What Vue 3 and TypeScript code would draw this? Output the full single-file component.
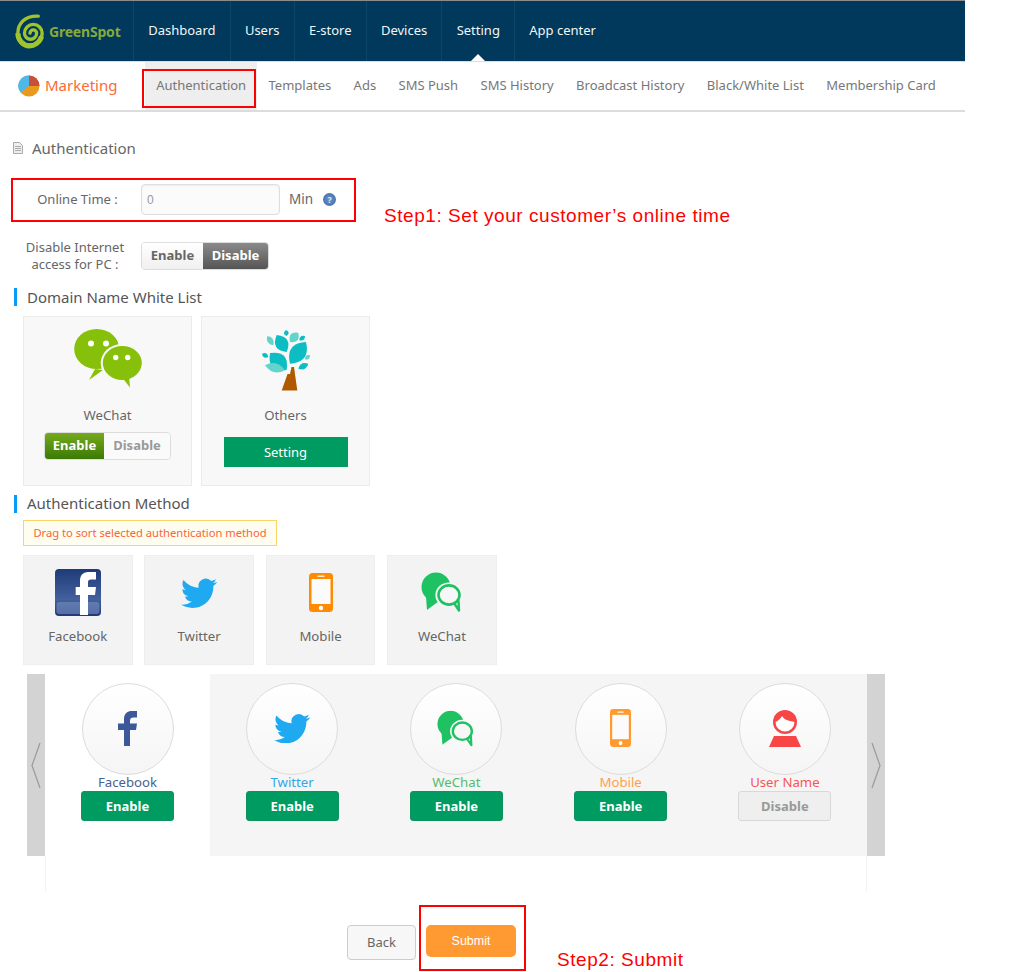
<template>
  <div class="page">
    <svg class="defs" width="0" height="0">
      <defs>
        <symbol id="ic-twitter" viewBox="0 1.5 24 20">
          <path d="M23.953 4.57a10 10 0 01-2.825.775 4.958 4.958 0 002.163-2.723c-.951.555-2.005.959-3.127 1.184a4.92 4.92 0 00-8.384 4.482C7.69 8.095 4.067 6.13 1.64 3.162a4.822 4.822 0 00-.666 2.475c0 1.71.87 3.213 2.188 4.096a4.904 4.904 0 01-2.228-.616v.06a4.923 4.923 0 003.946 4.827 4.996 4.996 0 01-2.212.085 4.936 4.936 0 004.604 3.417 9.867 9.867 0 01-6.102 2.105c-.39 0-.779-.023-1.17-.067a13.995 13.995 0 007.557 2.209c9.053 0 13.998-7.496 13.998-13.985 0-.21 0-.42-.015-.63A9.935 9.935 0 0024 4.59z" fill="#1fa9f0" />
        </symbol>
        <symbol id="ic-wechat" viewBox="0 0 42 40">
          <path d="M5 25 L6 38 L18 29z" fill="#1fc263" />
          <circle cx="15" cy="15" r="14.5" fill="#1fc263" />
          <ellipse cx="28" cy="23" rx="13.6" ry="12.6" fill="#f7f7f7" />
          <path d="M33 31 L38 38.5 L37.5 29z" fill="#f7f7f7" stroke="#1fc263" stroke-width="2.4" stroke-linejoin="round" />
          <ellipse cx="28" cy="23" rx="10.5" ry="9.6" fill="#f7f7f7" stroke="#1fc263" stroke-width="2.6" />
        </symbol>
        <symbol id="ic-phone" viewBox="0 0 24 39" preserveAspectRatio="none">
          <rect width="24" height="39" rx="3.5" fill="currentColor" />
          <rect x="2.5" y="6" width="19" height="25" fill="#fbfbfb" />
          <rect x="8.5" y="2.6" width="7" height="1.2" fill="#fff" />
          <circle cx="12" cy="35" r="2.2" fill="#fff" />
        </symbol>
      </defs>
    </svg>

    <header class="topbar">
      <div class="brand">
        <svg class="spiral" width="32" height="36" viewBox="0 0 29 32">
          <path d="M14.5 18 a3 3 0 0 1 6 0 a5.5 5.5 0 0 1 -11 0 a8 8 0 0 1 16 0 a11 11 0 0 1 -22 0 C3.5 9 10 2 22 2.5" fill="none" stroke="#a0c52c" stroke-width="3" stroke-linecap="round" />
          <path d="M25 21 C23 27 18 29.5 14 29.5 C8 29.5 3.5 24 3.5 18" fill="none" stroke="#a0c52c" stroke-width="4.6" />
        </svg>
        <span class="brand-name">GreenSpot</span>
      </div>
      <nav class="mainnav">
        <a v-for="item in mainNav" :key="item" class="mainnav-item" :class="{ active: item === 'Setting' }">{{ item }}</a>
      </nav>
    </header>

    <div class="subbar">
      <svg class="pie" width="22" height="22" viewBox="0 0 22 22">
        <circle cx="11" cy="11" r="10.5" fill="#e99a1d" />
        <path d="M11 11 L11 .5 A10.5 10.5 0 0 1 21.5 11z" fill="#c8503a" />
        <path d="M11 11 L11 .5 A10.5 10.5 0 0 0 2.5 17.5z" fill="#4fb8ea" />
      </svg>
      <span class="section-name">Marketing</span>
      <nav class="subnav">
        <a v-for="item in subNav" :key="item" class="subnav-item" :class="{ active: item === 'Authentication' }">{{ item }}</a>
      </nav>
    </div>

    <main class="content">
      <h1 class="page-title">
        <svg width="10" height="12" viewBox="0 0 10 12">
          <path d="M.5.5h6l3 3v8h-9z" fill="#eee" stroke="#aaa" />
          <path d="M2 4.5h6M2 6.5h6M2 8.5h6" stroke="#aaa" />
        </svg>
        Authentication
      </h1>

      <div class="form-row time-row">
        <label class="form-label">Online Time :</label>
        <input class="time-input" value="0" readonly />
        <span class="unit">Min</span>
        <span class="help">?</span>
      </div>

      <div class="form-row pc-row">
        <label class="form-label two-line">Disable Internet<br />access for PC :</label>
        <div class="toggle">
          <span class="toggle-off">Enable</span>
          <span class="toggle-dark">Disable</span>
        </div>
      </div>

      <h2 class="section-title">Domain Name White List</h2>
      <div class="domain-cards">
        <div class="domain-card">
          <svg class="domain-icon wechat-big" width="68" height="60" viewBox="0 0 68 60">
            <path d="M21 40 L15 51 L29 41z" fill="#86c00a" />
            <ellipse cx="22.7" cy="20" rx="22.5" ry="20" fill="#86c00a" />
            <ellipse cx="48.3" cy="34" rx="21.6" ry="19" fill="#f8f8f8" />
            <path d="M47 47 L56 58.5 L55 47z" fill="#86c00a" />
            <ellipse cx="48.3" cy="34" rx="19.5" ry="17" fill="#86c00a" />
            <circle cx="17" cy="14.5" r="3" fill="#fff" />
            <circle cx="32" cy="14.5" r="3" fill="#fff" />
            <circle cx="41.7" cy="28.5" r="2.7" fill="#fff" />
            <circle cx="53.7" cy="28.5" r="2.7" fill="#fff" />
          </svg>
          <span class="domain-name">WeChat</span>
          <div class="toggle green-toggle">
            <span class="toggle-green">Enable</span>
            <span class="toggle-muted">Disable</span>
          </div>
        </div>
        <div class="domain-card">
          <svg class="domain-icon" width="48" height="62" viewBox="0 0 48 62">
            <path d="M19.7 61.5 L35.3 61.5 L32 38 L29.5 38 L28 45 L25.5 45z" fill="#b05a00" />
            <path v-for="(leaf, i) in treeLeaves" :key="i" :d="leaf.d" :fill="leaf.fill" />
          </svg>
          <span class="domain-name">Others</span>
          <button class="setting-btn">Setting</button>
        </div>
      </div>

      <h2 class="section-title method-title">Authentication Method</h2>
      <div class="hint">Drag to sort selected authentication method</div>

      <div class="method-cards">
        <div class="method-card">
          <svg class="method-icon" width="46" height="47" viewBox="0 0 46 47">
            <defs>
              <linearGradient id="fb-bg" x1="0" y1="0" x2="0" y2="1">
                <stop offset="0" stop-color="#1f3a78" />
                <stop offset="0.65" stop-color="#43619d" />
                <stop offset="1" stop-color="#1f3a78" />
              </linearGradient>
            </defs>
            <rect width="46" height="47" rx="4" fill="url(#fb-bg)" />
            <rect x="1.5" y="33" width="43" height="12" rx="3" fill="#7f95c4" opacity="0.55" />
            <path d="M25 46 V26 H20.7 V18 H25 V12 C25 5 29 3 34 3 H41 V10.5 H36 C34 10.5 33 11.5 33 13 V18 H41 L40 26 H33 V46 Z" fill="#fff" />
          </svg>
          <span>Facebook</span>
        </div>
        <div class="method-card">
          <svg class="method-icon" width="36" height="31" viewBox="0 0 36 31"><use href="#ic-twitter" /></svg>
          <span>Twitter</span>
        </div>
        <div class="method-card">
          <svg class="method-icon phone-card" width="24" height="39" viewBox="0 0 24 39"><use href="#ic-phone" /></svg>
          <span>Mobile</span>
        </div>
        <div class="method-card">
          <svg class="method-icon" width="42" height="40" viewBox="0 0 42 40"><use href="#ic-wechat" /></svg>
          <span>WeChat</span>
        </div>
      </div>

      <div class="carousel">
        <div class="carousel-arrow">
          <svg width="10" height="47" viewBox="0 0 10 47"><path d="M9 1 L1 23.5 L9 46" fill="none" stroke="#9a9a9a" stroke-width="1.2" /></svg>
        </div>
        <div class="carousel-items">
          <div v-for="m in methods" :key="m.name" class="carousel-item" :class="{ selected: m.name !== 'Facebook' }">
            <div class="round">
              <svg v-if="m.name === 'Facebook'" width="19" height="35" viewBox="0 0 19 35">
                <path d="M6 35 V19 H0 V12.5 H6 V8 C6 2.5 9.5 0 14 0 H19 V6.5 H15.5 C13 6.5 12 7.5 12 10 V12.5 H19 L18 19 H12 V35Z" fill="#3b5998" />
              </svg>
              <svg v-else-if="m.name === 'Twitter'" width="36" height="30" viewBox="0 0 36 30"><use href="#ic-twitter" /></svg>
              <svg v-else-if="m.name === 'WeChat'" width="38" height="37" viewBox="0 0 42 40"><use href="#ic-wechat" /></svg>
              <svg v-else-if="m.name === 'Mobile'" class="phone-round" width="21" height="38" viewBox="0 0 24 39" preserveAspectRatio="none"><use href="#ic-phone" /></svg>
              <svg v-else width="32" height="37" viewBox="0 0 32 37">
                <circle cx="16" cy="12" r="12" fill="#f84545" />
                <path d="M6.5 12 C9 11 12 8.5 13 6 C15 10 21 11 25.5 12 A9.5 9.5 0 0 1 6.5 12z" fill="#fff" />
                <path d="M5 26 H27 L32 37 H0z" fill="#f84545" />
              </svg>
            </div>
            <span class="round-label" :style="{ color: m.color }">{{ m.name }}</span>
            <button class="state-btn" :class="{ off: !m.enabled }">{{ m.enabled ? 'Enable' : 'Disable' }}</button>
          </div>
        </div>
        <div class="carousel-arrow">
          <svg width="10" height="47" viewBox="0 0 10 47"><path d="M1 1 L9 23.5 L1 46" fill="none" stroke="#9a9a9a" stroke-width="1.2" /></svg>
        </div>
      </div>
      <div class="carousel-foot"></div>

      <div class="actions">
        <button class="back-btn">Back</button>
        <button class="submit-btn">Submit</button>
      </div>
    </main>

    <!-- tutorial markup drawn over the page -->
    <div class="mark mark-tab"></div>
    <div class="mark mark-time"></div>
    <div class="mark mark-submit"></div>
    <div class="step step-one">Step1: Set your customer’s online time</div>
    <div class="step step-two">Step2: Submit</div>
  </div>
</template>

<script setup lang="ts">
interface Method {
  name: string
  color: string
  enabled: boolean
}

const mainNav = ['Dashboard', 'Users', 'E-store', 'Devices', 'Setting', 'App center']
const subNav = [
  'Authentication',
  'Templates',
  'Ads',
  'SMS Push',
  'SMS History',
  'Broadcast History',
  'Black/White List',
  'Membership Card'
]

const methods: Method[] = [
  { name: 'Facebook', color: '#4b6092', enabled: true },
  { name: 'Twitter', color: '#33a6e6', enabled: true },
  { name: 'WeChat', color: '#55bb6a', enabled: true },
  { name: 'Mobile', color: '#ff9f50', enabled: true },
  { name: 'User Name', color: '#f85454', enabled: false }
]

// leaf = base point, tip point, half width, colour
const leaf = (x1: number, y1: number, x2: number, y2: number, w: number, fill: string) => {
  const mx = (x1 + x2) / 2
  const my = (y1 + y2) / 2
  const dx = y2 - y1
  const dy = x1 - x2
  const len = Math.hypot(dx, dy)
  const ox = (dx / len) * w * 2
  const oy = (dy / len) * w * 2
  return {
    d: `M${x1} ${y1} Q${mx + ox} ${my + oy} ${x2} ${y2} Q${mx - ox} ${my - oy} ${x1} ${y1}z`,
    fill
  }
}

const dark = '#0cbdc4'
const light = '#63d3cc'
const treeLeaves = [
  leaf(24.7, 23, 14.7, 6, 6.5, dark),
  leaf(28, 34.7, 44, 13, 8, dark),
  leaf(24.6, 41, 8, 24, 8, dark),
  leaf(23, 41.3, 3, 36.3, 4.5, light),
  leaf(28, 13, 36.3, 3.7, 4.5, light),
  leaf(24.6, 7, 24, 1, 2.4, dark),
  leaf(11.3, 16.3, 5.3, 7, 3, light),
  leaf(37.3, 11.3, 43, 7, 2.2, dark),
  leaf(6.3, 28, 0, 24.7, 2.2, dark),
  leaf(43, 30.3, 48, 26.3, 2, light),
  leaf(36.3, 39.7, 46.3, 34.7, 3, dark)
]
</script>

<style>
html,
body {
  margin: 0;
  background: #fff;
  overflow: hidden;
}
</style>

<style scoped>
.page {
  position: relative;
  width: 965px;
  height: 972px;
  font-family: "Noto Sans", "Open Sans", sans-serif;
  font-size: 13px;
  color: #666;
}

.defs {
  position: absolute;
}

.topbar {
  display: flex;
  height: 62px;
  box-sizing: border-box;
  background: #00395b;
  border-top: 1px solid #8c8c8c;
  border-bottom: 1px solid #d4e0e8;
}

.brand {
  display: flex;
  align-items: center;
  width: 133px;
  padding-left: 14px;
  box-sizing: border-box;
}

.spiral {
  flex: none;
}

.brand-name {
  margin-left: 3px;
  font-size: 14px;
  font-weight: 700;
  color: #86a93a;
  white-space: nowrap;
  letter-spacing: -0.2px;
}

.mainnav {
  display: flex;
}

.mainnav-item {
  position: relative;
  display: flex;
  align-items: center;
  padding: 0 14.2px 2px;
  border-left: 1px solid #0f4566;
  color: #f2f6f8;
  font-size: 13px;
  white-space: nowrap;
}

.mainnav-item.active::after {
  content: "";
  position: absolute;
  left: 50%;
  bottom: 0;
  margin-left: -7px;
  border: 7px solid transparent;
  border-top: 0;
  border-bottom-color: #fff;
}

.subbar {
  display: flex;
  align-items: stretch;
  height: 50px;
  box-sizing: border-box;
  padding-left: 18px;
  border-bottom: 2px solid #dcdcdc;
}

.pie {
  align-self: center;
  flex: none;
}

.section-name {
  align-self: center;
  width: 100px;
  margin: 0 0 2px 5px;
  font-size: 15px;
  color: #fb6a36;
}

.subnav {
  display: flex;
}

.subnav-item {
  display: flex;
  align-items: center;
  padding: 0 11.2px 2px;
  color: #777;
  white-space: nowrap;
}

.subnav-item.active {
  background: #eee;
}

.content {
  padding-left: 14px;
}

.page-title {
  display: flex;
  align-items: center;
  gap: 9px;
  height: 24px;
  margin: 24px 0 0 -1px;
  font-size: 15px;
  font-weight: 400;
  line-height: 23px;
  color: #666;
}

.form-row {
  display: flex;
  align-items: center;
}

.form-label {
  width: 127px;
  flex: none;
  box-sizing: border-box;
  text-align: center;
}

.time-row {
  height: 31px;
  margin-top: 24px;
}

.time-row .form-label {
  padding-bottom: 2px;
}

.time-input {
  width: 139px;
  height: 31px;
  box-sizing: border-box;
  padding: 0 5px;
  border: 1px solid #dedede;
  border-radius: 4px;
  background: #fbfbfb;
  box-shadow: inset 0 1px 2px #eee;
  font-family: "Liberation Sans", sans-serif;
  font-size: 12px;
  color: #999;
  outline: none;
}

.unit {
  margin-left: 9px;
  padding-bottom: 1px;
  font-size: 13.5px;
}

.help {
  width: 13px;
  height: 13px;
  margin-left: 10px;
  border-radius: 50%;
  background: radial-gradient(circle, #6c8fc4, #3c6aa8);
  color: #dde6f3;
  font-size: 9px;
  font-weight: 700;
  line-height: 13px;
  text-align: center;
}

.pc-row {
  height: 34px;
  margin-top: 24px;
}

.two-line {
  padding-right: 5px;
  line-height: 17px;
}

.toggle {
  display: flex;
  width: 128px;
  height: 28px;
  box-sizing: border-box;
  border: 1px solid #ddd;
  border-radius: 4px;
  overflow: hidden;
  font-size: 13px;
  font-weight: 700;
  line-height: 25px;
  text-align: center;
}

.toggle-off {
  width: 61px;
  background: linear-gradient(#fff, #f0f0f0);
  color: #666;
}

.toggle-dark {
  flex: 1;
  background: linear-gradient(#8a8a8a, #555);
  color: #fff;
}

.section-title {
  height: 18px;
  margin: 15px 0 0;
  padding-left: 10px;
  border-left: 3px solid #0a9bf5;
  font-size: 15px;
  font-weight: 400;
  line-height: 18px;
  color: #555;
}

.domain-cards {
  display: flex;
  gap: 9px;
  margin: 10px 0 0 9px;
}

.domain-card {
  display: flex;
  flex-direction: column;
  align-items: center;
  width: 169px;
  height: 170px;
  box-sizing: border-box;
  padding-top: 12px;
  border: 1px solid #ebebeb;
  background: #f8f8f8;
}

.domain-icon {
  flex: none;
}

.wechat-big {
  margin-bottom: 2px;
}

.domain-name {
  margin-top: 13px;
  line-height: 22px;
  font-size: 13.2px;
  white-space: nowrap;
}

.green-toggle {
  width: 127px;
  margin-top: 6px;
}

.toggle-green {
  width: 59px;
  background: linear-gradient(#74aa1c, #3c7a06);
  color: #fff;
}

.toggle-muted {
  flex: 1;
  background: #fafafa;
  color: #999;
}

.setting-btn {
  width: 124px;
  height: 30px;
  margin-top: 11px;
  border: 0;
  background: #009b61;
  color: #fff;
  font-family: inherit;
  font-size: 13px;
}

.method-title {
  margin-top: 9px;
  line-height: 17px;
}

.hint {
  width: 254px;
  height: 26px;
  box-sizing: border-box;
  margin: 7px 0 0 9px;
  border: 1px solid #fbd467;
  background: #fffdf0;
  color: #f9643b;
  font-size: 11.2px;
  line-height: 24px;
  text-align: center;
  white-space: nowrap;
}

.method-cards {
  display: flex;
  gap: 11.9px;
  margin: 9px 0 0 9px;
}

.method-card {
  display: flex;
  flex-direction: column;
  align-items: center;
  width: 109.5px;
  height: 110px;
  box-sizing: border-box;
  border: 1px solid #eee;
  background: #f3f3f3;
  font-size: 13.2px;
}

.method-card span {
  position: absolute;
  margin-top: 70px;
  line-height: 20px;
}

.method-icon {
  margin: auto 0;
  transform: translateY(-18px);
}

.phone-card {
  color: #ff8c00;
}

.phone-round {
  color: #ff9b2e;
}

.carousel {
  display: flex;
  width: 858px;
  height: 182px;
  margin: 9px 0 0 13px;
}

.carousel-arrow {
  display: flex;
  align-items: center;
  justify-content: center;
  width: 18px;
  flex: none;
  background: #d3d3d3;
}

.carousel-items {
  display: flex;
  flex: 1;
}

.carousel-item {
  display: flex;
  flex-direction: column;
  align-items: center;
  flex: 1;
  padding-top: 9px;
  box-sizing: border-box;
}

.carousel-item:first-child {
  flex: none;
  width: 165px;
}

.carousel-item.selected {
  background: #f5f5f5;
}

.round {
  display: flex;
  align-items: center;
  justify-content: center;
  width: 92px;
  height: 92px;
  box-sizing: border-box;
  padding-bottom: 2px;
  border: 1px solid #dcdcdc;
  border-radius: 50%;
  background: linear-gradient(#fff, #f5f5f5);
}

.round-label {
  height: 16px;
  font-size: 13.2px;
  line-height: 15px;
  white-space: nowrap;
}

.state-btn {
  width: 93px;
  height: 30px;
  padding-bottom: 2px;
  border: 1px solid #0f9160;
  border-radius: 3px;
  background: #009b61;
  color: #fff;
  font-family: inherit;
  font-size: 13px;
  font-weight: 700;
}

.state-btn.off {
  border-color: #d8d8d8;
  background: #efefef;
  color: #999;
}

.carousel-foot {
  width: 822px;
  height: 36px;
  box-sizing: border-box;
  margin-left: 31px;
  border: solid #f4f4f4;
  border-width: 0 1px;
}

.actions {
  display: flex;
  align-items: flex-start;
  gap: 10px;
  margin: 33px 0 0 333px;
}

.back-btn {
  width: 69px;
  height: 35px;
  padding-bottom: 2px;
  border: 1px solid #ccc;
  border-radius: 4px;
  background: #f7f7f7;
  color: #666;
  font-family: inherit;
  font-size: 13px;
}

.submit-btn {
  width: 90px;
  height: 32px;
  border: 0;
  border-radius: 5px;
  background: #ff9a33;
  color: #fff;
  font-family: "Liberation Sans", sans-serif;
  font-size: 12.5px;
}

.mark {
  position: absolute;
  box-sizing: border-box;
  border: 2px solid #f00;
}

.mark-tab {
  left: 142px;
  top: 69px;
  width: 114px;
  height: 39px;
}

.mark-time {
  left: 11px;
  top: 178px;
  width: 345px;
  height: 44px;
}

.mark-submit {
  left: 419px;
  top: 905px;
  width: 107px;
  height: 66px;
}

.step {
  position: absolute;
  font-family: "Liberation Sans", sans-serif;
  font-size: 19px;
  letter-spacing: 0.55px;
  line-height: 20px;
  color: #f00;
  white-space: nowrap;
}

.step-one {
  left: 384px;
  top: 206px;
}

.step-two {
  left: 557px;
  top: 950px;
}
</style>
